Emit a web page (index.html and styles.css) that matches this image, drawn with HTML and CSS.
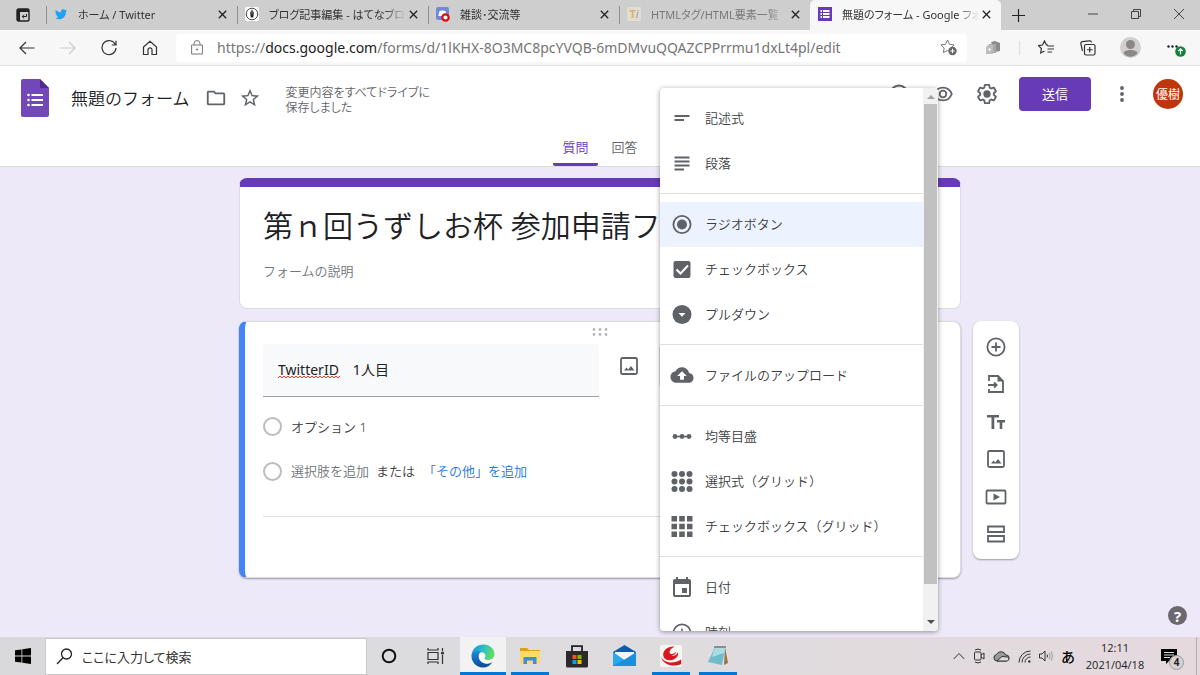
FILE: index.html
```
<!DOCTYPE html>
<html lang="ja">
<head>
    <meta charset="UTF-8">
    <meta name="viewport" content="width=device-width, initial-scale=1.0">
    <title>無題のフォーム - Google フォーム</title>
    <link rel="stylesheet" href="styles.css">
</head>
<body>
    <!-- browser tabs -->
    <div class="tabstrip">
        <button class="tab-menu" aria-label="タブ操作メニュー">
            <svg width="14" height="14" viewBox="0 0 14 14"><rect x="1" y="1" width="12" height="12" rx="1.5" fill="none" stroke="#222" stroke-width="1.4"/><path d="M1 1h12v3H1zM1 1h3v12H1z" fill="#222"/><path d="M10.500 6v2.500H6.500M8 6.800L6.300 8.500 8 10.200" fill="none" stroke="#222"/></svg>
        </button>
        <div class="tab">
            <svg width="14" height="14" viewBox="0 1 24 22" fill="#1da1f2"><path d="M22.46 6c-.77.35-1.6.58-2.46.69.88-.53 1.56-1.37 1.88-2.38-.83.5-1.75.85-2.72 1.05C18.37 4.5 17.26 4 16 4c-2.35 0-4.27 1.92-4.27 4.29 0 .34.04.67.11.98C8.28 9.09 5.11 7.38 3 4.79c-.37.63-.58 1.37-.58 2.15 0 1.49.75 2.81 1.91 3.56-.71 0-1.37-.2-1.95-.5v.03c0 2.08 1.48 3.82 3.44 4.21a4.22 4.22 0 0 1-1.93.07 4.28 4.28 0 0 0 4 2.98 8.521 8.521 0 0 1-5.33 1.84c-.34 0-.68-.02-1.02-.06C3.44 20.29 5.7 21 8.12 21 16 21 20.33 14.46 20.33 8.79c0-.19 0-.37-.01-.56.84-.6 1.56-1.36 2.14-2.23z"/></svg>
            <span class="tab-title">ホーム / Twitter</span>
            <button class="tab-close" aria-label="閉じる"><svg width="9" height="9" viewBox="0 0 9 9"><path d="M.8.8l7.400 7.400M8.200.8L.8 8.200"/></svg></button>
        </div>
        <div class="tab">
            <svg width="14" height="14" viewBox="0 0 14 14"><rect width="14" height="14" rx="2" fill="#fff"/><circle cx="7" cy="7" r="5.800" fill="none" stroke="#333" stroke-width=".9"/><path d="M7 2.500c1 1.500 1.800 2.600 1.800 4L8.200 10.500H5.800L5.200 6.500c0-1.400.8-2.500 1.800-4z" fill="#222"/><path d="M7 3v4.500" stroke="#fff" stroke-width=".5"/></svg>
            <span class="tab-title">ブログ記事編集 - はてなブログ</span>
            <button class="tab-close" aria-label="閉じる"><svg width="9" height="9" viewBox="0 0 9 9"><path d="M.8.8l7.400 7.400M8.200.8L.8 8.200"/></svg></button>
        </div>
        <div class="tab">
            <svg width="14" height="15" viewBox="0 0 14 15"><rect width="13" height="13" rx="2" fill="#7289da"/><path d="M2.500 9c0-2 .6-4 1.200-5 1.800-.8 3.800-.8 5.600 0 .6 1 1.200 3 1.200 5" fill="#fff"/><circle cx="9.500" cy="10.500" r="3.200" fill="#fff" stroke="#e00b0b" stroke-width="2.200"/></svg>
            <span class="tab-title">雑談･交流等</span>
            <button class="tab-close" aria-label="閉じる"><svg width="9" height="9" viewBox="0 0 9 9"><path d="M.8.8l7.400 7.400M8.200.8L.8 8.200"/></svg></button>
        </div>
        <div class="tab">
            <span class="favicon-ti"><b>T</b><i>i</i></span>
            <span class="tab-title sleeping">HTMLタグ/HTML要素一覧</span>
            <button class="tab-close" aria-label="閉じる"><svg width="9" height="9" viewBox="0 0 9 9"><path d="M.8.8l7.400 7.400M8.200.8L.8 8.200"/></svg></button>
        </div>
        <div class="tab active">
            <svg width="14" height="14" viewBox="0 0 14 14"><rect width="14" height="14" fill="#673ab7"/><path d="M2.500 3h1.500v2H2.500zM2.500 6h1.500v2H2.500zM2.500 9h1.500v2H2.500zM5 3h6.500v2H5zM5 6h6.500v2H5zM5 9h6.500v2H5z" fill="#fff"/></svg>
            <span class="tab-title">無題のフォーム - Google フォーム</span>
            <button class="tab-close" aria-label="閉じる"><svg width="9" height="9" viewBox="0 0 9 9"><path d="M.8.8l7.400 7.400M8.200.8L.8 8.200"/></svg></button>
        </div>
        <button class="new-tab" aria-label="新しいタブ"><svg width="13" height="13" viewBox="0 0 13 13"><path d="M6.500 0v13M0 6.500h13" stroke="#222" stroke-width="1.200"/></svg></button>
        <div class="window-controls">
            <button aria-label="最小化"><svg width="10" height="10" viewBox="0 0 10 10"><path d="M0 5h10"/></svg></button>
            <button aria-label="元に戻す"><svg width="10" height="10" viewBox="0 0 10 10"><path d="M.5 2.500h7v7h-7zM2.500 2.500v-2h7v7h-2"/></svg></button>
            <button aria-label="閉じる"><svg width="10" height="10" viewBox="0 0 10 10"><path d="M0 0l10 10M10 0L0 10"/></svg></button>
        </div>
    </div>

    <!-- address bar -->
    <div class="navbar">
        <button aria-label="戻る"><svg width="16" height="14" viewBox="0 0 16 14"><path d="M15.500 7H1M7 1L1 7l6 6"/></svg></button>
        <button aria-label="進む" disabled><svg width="16" height="14" viewBox="0 0 16 14"><path d="M.5 7H15M9 1l6 6-6 6"/></svg></button>
        <button aria-label="更新"><svg width="16" height="16" viewBox="0 0 16 16"><path d="M14.500 5A7 7 0 1 0 15 8M15 .8V5h-4.200"/></svg></button>
        <button aria-label="ホーム"><svg width="16" height="16" viewBox="0 0 16 16"><path d="M1.500 7L8 1.200 14.500 7v7.500H10V9.800a2 2 0 0 0-4 0v4.700H1.500z"/></svg></button>
        <div class="address">
            <svg width="12" height="15" viewBox="0 0 12 15"><path d="M.6 5h10.800v9H.6zM3 5V3.500a3 3 0 0 1 6 0V5" fill="none" stroke="#777"/><circle cx="6" cy="9.500" r="1" fill="#777"/></svg>
            <div class="url" role="textbox" aria-label="アドレス" contenteditable="true" spellcheck="false">https://<b>docs.google.com</b>/forms/d/1lKHX-8O3MC8pcYVQB-6mDMvuQQAZCPPrrmu1dxLt4pl/edit</div>
            <button aria-label="お気に入りに追加"><svg width="17" height="17" viewBox="0 0 17 17"><path d="M7.500 1l2 4.300 4.600.6L10.800 9l.8 4.600-4.100-2.200-4.100 2.200.8-4.600L.9 5.900l4.600-.6z" fill="none" stroke="#777"/><circle cx="12.500" cy="12" r="4.200" fill="#666"/><path d="M12.500 9.800v4.400M10.300 12h4.400" stroke="#fff"/></svg></button>
        </div>
        <button class="extension" aria-label="拡張機能"><svg width="14" height="14" viewBox="0 0 14 14"><path d="M5 1l4-1 5 2v8l-5 1z" fill="#8c8c8c"/><path d="M3 3h7v9H3z" fill="#a8a8a8"/><path d="M0 6l2-2h5v9H0z" fill="#bdbdbd"/><path d="M3.500 7v3M2 8.500h3" stroke="#eee"/></svg></button>
        <button aria-label="お気に入り"><svg width="16" height="15" viewBox="0 0 16 15"><path d="M10 5.200L8.500 5 6.500 1l-2 4-4 .6L3.400 8.500l-.7 4.500 3.800-2M9.500 6H16M9.500 9H16M9.500 12H14"/></svg></button>
        <button aria-label="コレクション"><svg width="16" height="16" viewBox="0 0 16 16"><rect x="4.500" y="4.500" width="10.500" height="10.500" rx="1.500"/><path d="M9.750 7v5.500M7 9.750h5.500M2.500 11L.8 3.500A1.800 1.800 0 0 1 2.200 1.600L9.500.8a1.800 1.800 0 0 1 2 1.500"/></svg></button>
        <button class="profile" aria-label="プロファイル"><svg width="21" height="21" viewBox="0 0 21 21"><circle cx="10.500" cy="10.500" r="10.500" fill="#d2d0ce"/><circle cx="10.500" cy="7.500" r="4.500" fill="#8a8886"/><path d="M3.500 16c1-4 13-4 14 0-3 5-11 5-14 0z" fill="#8a8886"/></svg></button>
        <button class="more" aria-label="設定など"><svg width="20" height="20" viewBox="0 0 20 20"><g fill="#222"><circle cx="2.500" cy="8.500" r="1.200"/><circle cx="6.500" cy="8.500" r="1.200"/><circle cx="10.500" cy="8.500" r="1.200"/></g><circle cx="14.500" cy="13.500" r="5.300" fill="#15803c"/><path d="M14.500 16.500v-5.500M12.300 13l2.200-2.200 2.200 2.200" stroke="#fff" fill="none"/></svg></button>
    </div>

    <!-- forms header -->
    <header class="app-header">
        <div class="header-row">
            <svg class="logo" width="28" height="38" viewBox="0 0 28 38"><path d="M2 0h17l9 9v27a2 2 0 0 1-2 2H2a2 2 0 0 1-2-2V2a2 2 0 0 1 2-2z" fill="#7248b9"/><path d="M19 0l9 9h-9z" fill="#4f2f8c"/><g fill="#fff"><circle cx="7.500" cy="16" r="1.300"/><circle cx="7.500" cy="21" r="1.300"/><circle cx="7.500" cy="26" r="1.300"/><path d="M10.500 15H22v2H10.500zM10.500 20H22v2H10.500zM10.500 25H22v2H10.500z"/></g></svg>
            <span class="doc-name">無題のフォーム</span>
            <button aria-label="フォルダに移動"><svg width="22" height="22" viewBox="0 0 24 24" fill="#5f6368"><path d="M9.170 6l2 2H20v10H4V6h5.170M10 4H4c-1.100 0-1.990.9-1.990 2L2 18c0 1.100.9 2 2 2h16c1.100 0 2-.9 2-2V8c0-1.100-.9-2-2-2h-8l-2-2z"/></svg></button>
            <button class="star" aria-label="スターを付ける"><svg width="22" height="22" viewBox="0 0 24 24" fill="#5f6368"><path d="M22 9.240l-7.190-.62L12 2 9.190 8.630 2 9.240l5.460 4.730L5.820 21 12 17.270 18.180 21l-1.630-7.030L22 9.240zM12 15.400l-3.760 2.270 1-4.280-3.320-2.880 4.380-.38L12 6.100l1.710 4.040 4.380.38-3.320 2.880 1 4.280L12 15.400z"/></svg></button>
            <span class="saved">変更内容をすべてドライブに保存しました</span>
            <div class="header-actions">
                <button aria-label="テーマをカスタマイズ"><svg width="22" height="22" viewBox="0 0 22 22" fill="none" stroke="#5f6368" stroke-width="2"><circle cx="11" cy="11" r="8.500"/></svg></button>
                <button aria-label="プレビュー"><svg width="20" height="16" viewBox="0 0 20 16" fill="none" stroke="#5f6368" stroke-width="1.800"><path d="M1.200 8C4.500-.6 15.500-.6 18.800 8 15.500 16.600 4.500 16.600 1.200 8z"/><circle cx="10" cy="8" r="3.300"/></svg></button>
                <button aria-label="設定"><svg width="22" height="22" viewBox="0 0 24 24"><path fill="none" stroke="#5f6368" stroke-width="2" d="M19.430 12.980c.04-.32.07-.64.07-.98s-.03-.66-.07-.98l2.110-1.650c.19-.15.24-.42.12-.64l-2-3.460c-.12-.22-.39-.3-.61-.22l-2.490 1c-.52-.4-1.080-.73-1.690-.98l-.38-2.650C14.460 2.180 14.250 2 14 2h-4c-.25 0-.46.18-.49.42l-.38 2.650c-.61.25-1.170.59-1.690.98l-2.490-1c-.23-.09-.49 0-.61.22l-2 3.460c-.13.22-.07.49.12.64l2.110 1.650c-.04.32-.07.65-.07.98s.03.66.07.98l-2.110 1.650c-.19.15-.24.42-.12.64l2 3.460c.12.22.39.3.61.22l2.490-1c.52.4 1.080.73 1.690.98l.38 2.650c.03.24.24.42.49.42h4c.25 0 .46-.18.49-.42l.38-2.650c.61-.25 1.170-.59 1.690-.98l2.490 1c.23.09.49 0 .61-.22l2-3.460c.12-.22.07-.49-.12-.64z"/><circle cx="12" cy="12" r="4" fill="#5f6368"/></svg></button>
                <button class="send">送信</button>
                <button class="kebab" aria-label="その他"><svg width="4" height="16" viewBox="0 0 4 16" fill="#5f6368"><circle cx="2" cy="2" r="1.900"/><circle cx="2" cy="8" r="1.900"/><circle cx="2" cy="14" r="1.900"/></svg></button>
                <button class="account">優樹</button>
            </div>
        </div>
        <nav class="form-tabs">
            <button class="selected">質問</button>
            <button>回答</button>
        </nav>
    </header>

    <main class="canvas">
        <section class="card title-card">
            <input class="form-title" type="text" aria-label="フォームのタイトル" value="第ｎ回うずしお杯 参加申請フォーム">
            <input class="form-desc" type="text" aria-label="フォームの説明" placeholder="フォームの説明">
        </section>

        <section class="card question-card">
            <svg class="drag" width="16" height="8" viewBox="0 0 16 8" fill="#b4b6b9"><circle cx="2" cy="1.500" r="1.400"/><circle cx="8" cy="1.500" r="1.400"/><circle cx="14" cy="1.500" r="1.400"/><circle cx="2" cy="6.500" r="1.400"/><circle cx="8" cy="6.500" r="1.400"/><circle cx="14" cy="6.500" r="1.400"/></svg>
            <div class="question-row">
                <div class="question-field">
                    <input type="text" aria-label="質問" value="TwitterID　1人目" spellcheck="false">
                    <svg class="squiggle" width="62" height="4"><defs><pattern id="wave" width="4" height="4" patternUnits="userSpaceOnUse"><path d="M0 3l2-2 2 2" fill="none" stroke="#f33"/></pattern></defs><rect width="62" height="4" fill="url(#wave)"/></svg>
                </div>
                <button class="add-image" aria-label="画像を追加"><svg width="18" height="18" viewBox="0 0 18 18"><rect x="1" y="1" width="16" height="16" rx="1.500" fill="none" stroke="#5f6368" stroke-width="1.800"/><path d="M4 13.500l2.500-3 1.800 2 2.700-3.500 3.500 4.500z" fill="#5f6368"/></svg></button>
                <button class="type-select" aria-label="質問の種類" aria-haspopup="listbox"></button>
            </div>
            <div class="option">
                <input type="radio" name="answer" aria-label="オプション 1" disabled>
                <input class="option-text" type="text" aria-label="選択肢の値" value="オプション 1">
            </div>
            <div class="option">
                <input type="radio" name="answer" id="add-option" disabled>
                <label for="add-option">選択肢を追加</label>
                <span class="or">または</span>
                <a href="#">「その他」を追加</a>
            </div>
            <hr>

            <!-- question type menu, opened over the card -->
            <div class="type-menu">
                <div class="type-list" role="listbox" aria-label="質問の種類">
                    <div class="type-group">
                        <button role="option"><svg width="24" height="24" viewBox="0 0 24 24"><path d="M4.500 9h15v2h-15zM4.500 13H14v2H4.500z"/></svg>記述式</button>
                        <button role="option"><svg width="24" height="24" viewBox="0 0 24 24"><path d="M4.500 5.500h15v2h-15zM4.500 9.500h15v2h-15zM4.500 13.500h15v2h-15zM4.500 17.500H14v2H4.500z"/></svg>段落</button>
                    </div>
                    <div class="type-group">
                        <button role="option" class="current" aria-selected="true"><svg width="24" height="24" viewBox="0 0 24 24"><circle cx="12" cy="12.500" r="8.600" fill="none" stroke="#5f6368" stroke-width="1.800"/><circle cx="12" cy="12.500" r="5"/></svg>ラジオボタン</button>
                        <button role="option"><svg width="24" height="24" viewBox="0 0 24 24"><rect x="3.500" y="4" width="17" height="17" rx="2"/><path d="M6.500 12.500l4 4 7.500-8" fill="none" stroke="#fff" stroke-width="2"/></svg>チェックボックス</button>
                        <button role="option"><svg width="24" height="24" viewBox="0 0 24 24"><circle cx="12" cy="12.500" r="9.500"/><path d="M8.500 11h7L12 14.800z" fill="#fff"/></svg>プルダウン</button>
                    </div>
                    <div class="type-group">
                        <button role="option"><svg width="24" height="24" viewBox="-.5 -.5 25 25"><path d="M19.350 10.040C18.670 6.590 15.640 4 12 4 9.110 4 6.600 5.640 5.350 8.040 2.340 8.360 0 10.910 0 14c0 3.310 2.690 6 6 6h13c2.760 0 5-2.240 5-5 0-2.640-2.050-4.780-4.650-4.960zM14 13v4h-4v-4H7l5-5 5 5h-3z"/></svg>ファイルのアップロード</button>
                    </div>
                    <div class="type-group">
                        <button role="option"><svg width="24" height="24" viewBox="0 0 24 24"><circle cx="5" cy="12.500" r="2.400"/><circle cx="12" cy="12.500" r="2.400"/><circle cx="19" cy="12.500" r="2.400"/><path d="M5 11.700h14v1.600H5z"/></svg>均等目盛</button>
                        <button role="option"><svg width="24" height="24" viewBox="0 0 24 24"><circle cx="4.500" cy="5" r="3"/><circle cx="12" cy="5" r="3"/><circle cx="19.500" cy="5" r="3"/><circle cx="4.500" cy="12.500" r="3"/><circle cx="12" cy="12.500" r="3"/><circle cx="19.500" cy="12.500" r="3"/><circle cx="4.500" cy="20" r="3"/><circle cx="12" cy="20" r="3"/><circle cx="19.500" cy="20" r="3"/></svg>選択式（グリッド）</button>
                        <button role="option"><svg width="24" height="24" viewBox="0 0 24 24"><path d="M1.500 2H7v5.500H1.500zM9.200 2h5.600v5.500H9.200zM17 2h5.500v5.500H17zM1.500 9.700H7v5.600H1.500zM9.200 9.700h5.600v5.600H9.200zM17 9.700h5.500v5.600H17zM1.500 17.500H7V23H1.500zM9.200 17.500h5.600V23H9.200zM17 17.500h5.500V23H17z"/></svg>チェックボックス（グリッド）</button>
                    </div>
                    <div class="type-group">
                        <button role="option"><svg width="24" height="24" viewBox="0 0 24 24"><path transform="translate(0 1)" d="M17 12h-5v5h5v-5zM16 1v2H8V1H6v2H5c-1.110 0-1.990.9-1.990 2L3 19c0 1.100.89 2 2 2h14c1.100 0 2-.9 2-2V5c0-1.100-.9-2-2-2h-1V1h-2zm3 18H5V8h14v11z"/></svg>日付</button>
                        <button role="option"><svg width="24" height="24" viewBox="0 0 24 24"><circle cx="12" cy="13" r="8.600" fill="none" stroke="#5f6368" stroke-width="1.800"/><path d="M11.200 8.500h1.600V13h-1.600z"/></svg>時刻</button>
                    </div>
                </div>
                <div class="scrollbar">
                    <svg width="8" height="4" viewBox="0 0 8 4"><path d="M0 4l4-4 4 4z" fill="#a3a3a3"/></svg>
                    <div class="track"><div class="thumb"></div></div>
                    <svg width="8" height="4" viewBox="0 0 8 4"><path d="M0 0l4 4 4-4z" fill="#505050"/></svg>
                </div>
            </div>
        </section>

        <aside class="tools">
            <button aria-label="質問を追加"><svg width="20" height="20" viewBox="0 0 20 20"><circle cx="10" cy="10" r="8.600"/><path d="M10 5.500v9M5.500 10h9"/></svg></button>
            <button aria-label="質問をインポート"><svg width="20" height="20" viewBox="0 0 20 20"><path d="M3 7V2h9l5 5v11H3v-3M2 11h8.500M8 8.300l2.700 2.700L8 13.700"/><path d="M11.500 1.500l6 6h-6z" fill="#5f6368" stroke="none"/></svg></button>
            <button aria-label="タイトルと説明を追加"><svg width="20" height="20" viewBox="0 0 20 20"><g fill="#5f6368" stroke="none"><rect x="1" y="3" width="12" height="2.500"/><rect x="5.500" y="3" width="2.800" height="14"/><rect x="11" y="8" width="8" height="2.500"/><rect x="13.700" y="8" width="2.600" height="9"/></g></svg></button>
            <button aria-label="画像を追加"><svg width="20" height="20" viewBox="0 0 20 20"><rect x="2" y="2" width="16" height="16" rx="1.500"/><path d="M5 14.500l2.500-3 1.800 2 2.700-3.500 3.500 4.500z" fill="#5f6368" stroke="none"/></svg></button>
            <button aria-label="動画を追加"><svg width="22" height="20" viewBox="0 0 22 20"><rect x="1.500" y="3.500" width="19" height="13" rx="1"/><path d="M8.500 6.500l6.500 3.500-6.500 3.500z" fill="#5f6368" stroke="none"/></svg></button>
            <button aria-label="セクションを追加"><svg width="20" height="20" viewBox="0 0 20 20"><path d="M2 2.500h16V8H2zM2 12h16v5.500H2z"/></svg></button>
        </aside>
        <button class="help" aria-label="ヘルプ">?</button>
    </main>

    <!-- windows taskbar -->
    <footer class="taskbar">
        <button class="start" aria-label="スタート"><svg width="16" height="16" viewBox="0 0 16 16"><path d="M0 2.300L6.500 1.400v6.200H0zM7.300 1.300L16 0v7.600H7.300zM0 8.400h6.500v6.200L0 13.700zM7.300 8.400H16V16l-8.700-1.300z"/></svg></button>
        <label class="search">
            <svg width="17" height="17" viewBox="0 0 17 17" fill="none" stroke="#222" stroke-width="1.300"><circle cx="10.500" cy="6" r="5"/><path d="M7 9.800L1 16"/></svg>
            <input type="text" aria-label="検索" placeholder="ここに入力して検索">
        </label>
        <div class="apps">
            <button aria-label="Cortana"><svg width="16" height="16" viewBox="0 0 16 16"><circle cx="8" cy="8" r="6.300" fill="none" stroke="#111" stroke-width="2"/></svg></button>
            <button aria-label="タスク ビュー"><svg width="18" height="16" viewBox="0 0 18 16" fill="none" stroke="#333" stroke-width="1.200"><path d="M1 4.500h10v7H1zM1 0v2h10V0M1 16v-2h10v2M15.500 0v3M15.500 7v9"/><circle cx="15.500" cy="5" r="1" fill="#333"/></svg></button>
            <button class="running focused" aria-label="Microsoft Edge"><svg width="24" height="24" viewBox="0 0 24 24"><defs><linearGradient id="e1" x2="1" y2=".3"><stop stop-color="#1687d9"/><stop offset=".55" stop-color="#2bc0c8"/><stop offset="1" stop-color="#5fdc62"/></linearGradient><linearGradient id="e2" x2="0" y2="1"><stop stop-color="#1b8ddb"/><stop offset="1" stop-color="#0b4a98"/></linearGradient></defs><path d="M.5 11C1.500 4.500 6.500.5 12.500.5c6.500 0 11 4.500 11 9.500 0 3.800-3 6-6.500 6-2.500 0-4-1-3.200-2 1.600-2 .6-5.500-3.300-5.500C5.500 8 2 9 .5 11z" fill="url(#e1)"/><path d="M.5 11C1.500 7.500 6 6 10.500 7.500 7.500 9 7 13 9 16c2.500 3.500 8 4.500 12.500 2C19 22 15.500 23.600 12 23.500 5 23.500 0 17.500.5 11z" fill="url(#e2)"/><path d="M10 8.500C7.500 10 7 14 9.500 17c3 3.200 8 3.500 12.200.8-3 .7-6.500.2-8.700-2.300-1-1.500-.5-2 .5-3.500.5-1.500-.5-3.500-3.500-3.500z" fill="#fff" fill-opacity=".85"/></svg></button>
            <button class="running" aria-label="エクスプローラー"><svg width="20" height="18" viewBox="0 0 20 18"><path d="M0 1h7l2 2h11v13H0z" fill="#e0a116"/><path d="M0 4h20v12.500H0z" fill="#ffd868"/><path d="M3.500 17v-7h13v7h-3.500v-3.500H7V17z" fill="#3a8edb"/></svg></button>
            <button aria-label="Microsoft Store"><svg width="22" height="23" viewBox="0 0 22 23"><path d="M6 7V1.200h10V7" fill="none" stroke="#222" stroke-width="1.800"/><path d="M0 6h22v15a1.500 1.500 0 0 1-1.500 1.500h-19A1.500 1.500 0 0 1 0 21z" fill="#2a2a2a"/><path d="M6.500 10h4v4h-4z" fill="#f25022"/><path d="M11.500 10h4v4h-4z" fill="#7fba00"/><path d="M6.500 15h4v4h-4z" fill="#00a4ef"/><path d="M11.500 15h4v4h-4z" fill="#ffb900"/></svg></button>
            <button aria-label="メール"><svg width="23" height="22" viewBox="0 0 23 22"><path d="M0 7l11.500-7L23 7v5H0z" fill="#0b5cab"/><path d="M2 7h19v8H2z" fill="#f5f5f5"/><path d="M0 7l11.500 8L23 7v14H0z" fill="#2ba8ea"/><path d="M0 21L23 8v13z" fill="#1b8fdc"/></svg></button>
            <button class="running" aria-label="ウイルスバスター"><svg width="22" height="22" viewBox="0 0 22 22"><rect width="22" height="22" rx="2" fill="#f7f5f4"/><path d="M14.500 1.500C8 1 3 5 3.200 10c.2 4.500 6 6.500 10.500 4.500 3.500-1.600 5-4.500 4.300-7.500-1 3-4 4.500-6.300 3.500 2.500-.3 4.300-2 4.300-4-1.500 2.300-4 3-5.700 2.200-1.800-1.500 0-5 4.200-7.200z" fill="#d71920"/><path d="M.8 11.500c2.500 6 12 8.500 20.400 3v4.500C13 22.500 3 20 .8 11.500z" fill="#d71920"/></svg></button>
            <button class="running" aria-label="メモ帳"><svg width="22" height="20" viewBox="0 0 22 20"><path d="M18 1l3 16-4 2z" fill="#9c7440"/><path d="M8 1l10 1-3 17L1 16z" fill="#6fbccb"/><path d="M8 1l10 1-1 5L5 11z" fill="#a8dde3"/><path d="M7 1h12" stroke="#777" stroke-width="1.500"/></svg></button>
        </div>
        <div class="tray">
            <svg width="12" height="8" viewBox="0 0 12 8"><path d="M.7 7L6 1.500 11.300 7"/></svg>
            <svg width="12" height="16" viewBox="0 0 12 16"><rect x="1.500" y="4" width="6.500" height="8" rx="1"/><path d="M8 7l3-2v6L8 9M2 2q3-2 6 0M2 14q3 2 6 0"/></svg>
            <svg width="17" height="12" viewBox="0 0 17 12"><path d="M4 11a3.300 3.300 0 0 1-.5-6.500 5 5 0 0 1 9.200.5A3 3 0 0 1 13.500 11z" fill="#999"/><path d="M4 11l5-4.500 5.500.5c2 1.500 1 4-1 4z" fill="#ddd"/></svg>
            <svg width="13" height="13" viewBox="0 0 13 13"><path d="M1 12.500A11.500 11.500 0 0 1 12.500 1M4 12.500A8.500 8.500 0 0 1 12.500 4M7 12.500A5.500 5.500 0 0 1 12.500 7"/><circle cx="11.300" cy="11.500" r="1.200" fill="#333" stroke="none"/></svg>
            <svg width="14" height="12" viewBox="0 0 14 12"><path d="M.5 4h2.500l3-3v10L3 8H.5zM8 4.500q1 1.500 0 3"/><path d="M10 3q2 3 0 6M12 1.500q3 4.500 0 9" stroke="#999"/></svg>
            <span class="ime">あ</span>
            <div class="clock"><span>12:11</span><span>2021/04/18</span></div>
            <button class="notify" aria-label="通知"><svg width="16" height="15" viewBox="0 0 16 15"><path d="M0 0h16v12H8l-3 3v-3H0z" fill="#000" stroke="none"/><path d="M3 3.500h10M3 6h10M3 8.500h6" stroke="#ddd"/></svg><span class="badge">4</span></button>
        </div>
    </footer>
</body>
</html>
```
FILE: styles.css
```
* {
    box-sizing: border-box;
}

body {
    margin: 0;
    height: 100vh;
    display: flex;
    flex-direction: column;
    overflow: hidden;
    font-family: "Noto Sans", "Noto Sans CJK JP", sans-serif;
    font-size: 13px;
    color: #3c4043;
    background: #eee9f8;
}

button {
    display: flex;
    align-items: center;
    justify-content: center;
    padding: 0;
    border: none;
    background: none;
    font: inherit;
    color: inherit;
    cursor: pointer;
}

input {
    border: none;
    background: none;
    padding: 0;
    margin: 0;
    min-width: 0;
    font: inherit;
    color: inherit;
    outline: none;
}

svg {
    flex: none;
}

/* tab strip */
.tabstrip {
    display: flex;
    height: 30px;
    background: #cecece;
    font-size: 11px;
    font-feature-settings: "palt";
    color: #333;
}

.tab-menu {
    width: 46px;
}

.tab {
    flex: 0 1 191px;
    display: flex;
    align-items: center;
    gap: 10px;
    padding: 0 10px 2px 8px;
    min-width: 0;
    background: linear-gradient(#8f8f8f, #8f8f8f) left 0 top 6px / 1px 18px no-repeat;
}

.tab-title {
    flex: 1;
    margin-right: -8px;
    overflow: hidden;
    white-space: nowrap;
    mask-image: linear-gradient(to right, #000 84%, transparent 100%);
}

.tab-title.sleeping {
    color: #777;
}

.tab-close {
    width: 10px;
}

.tab-close svg {
    fill: none;
    stroke: #222;
    stroke-width: 1.3;
}

.tab.active {
    background: #f7f7f7;
    border-radius: 5px 5px 0 0;
}

.favicon-ti {
    width: 14px;
    height: 14px;
    background: #e2dcd2;
    font-size: 11px;
    line-height: 14px;
    text-align: center;
    color: #9a9a9a;
}

.favicon-ti b {
    color: #dcb263;
}

.new-tab {
    width: 34px;
}

.window-controls {
    display: flex;
    margin-left: auto;
    padding-bottom: 3px;
}

.window-controls button {
    width: 43px;
}

.window-controls svg {
    fill: none;
    stroke: #444;
}

/* address bar row */
.navbar {
    display: flex;
    align-items: center;
    height: 36px;
    padding-left: 6px;
    background: #f7f7f7;
    border-bottom: 1px solid #e2e2e2;
}

.navbar button {
    width: 41px;
}

.navbar .address ~ button {
    width: 42px;
}

.navbar > button > svg {
    fill: none;
    stroke: #333;
    stroke-width: 1.2;
}

.navbar > button:disabled > svg {
    stroke: #ccc;
}

.navbar .profile svg,
.navbar .more svg,
.navbar .extension svg {
    stroke: none;
}

.address {
    flex: 1;
    display: flex;
    align-items: center;
    gap: 14px;
    min-width: 0;
    height: 28px;
    margin-left: 6px;
    padding: 0 10px 0 15px;
    background: #fff;
    border-radius: 4px;
}

.url {
    flex: 1;
    overflow: hidden;
    white-space: nowrap;
    font-size: 14px;
    color: #757575;
}

.url b {
    font-weight: normal;
    color: #222;
}

.navbar .address button {
    width: 18px;
}

.navbar .address ~ .extension {
    width: 53px;
    margin-right: 5px;
    border-right: 1px solid #ddd;
}

.navbar .address ~ .more {
    width: 49px;
}

/* forms header */
.app-header {
    height: 101px;
    background: #fff;
    border-bottom: 1px solid #dadce0;
}

.header-row {
    display: flex;
    align-items: center;
    height: 64px;
    padding-left: 21px;
}

.doc-name {
    margin: 0 15px 2px 22px;
    font-size: 17px;
    font-weight: 350;
    color: #202124;
}

.header-row .star {
    margin-left: 12px;
}

.saved {
    width: 152px;
    margin: 4px 0 0 25px;
    font-size: 12px;
    line-height: 15px;
    font-weight: 350;
    font-feature-settings: "palt";
    color: #5f6368;
}

.header-actions {
    display: flex;
    align-items: center;
    margin: 0 17px 8px auto;
}

.header-actions button {
    width: 44px;
}

.header-actions .send {
    width: 72px;
    height: 34px;
    margin-left: 10px;
    padding-bottom: 2px;
    border-radius: 4px;
    background: #673ab7;
    color: #fff;
}

.header-actions .kebab {
    width: 62px;
}

.header-actions .account {
    width: 30px;
    height: 30px;
    border-radius: 50%;
    background: #bf360c;
    color: #fff;
    font-size: 12px;
}

.form-tabs {
    display: flex;
    justify-content: center;
    gap: 4px;
    font-weight: 350;
}

.form-tabs button {
    width: 45px;
    height: 36px;
    border-bottom: 3px solid transparent;
    border-radius: 2px;
    color: #5f6368;
}

.form-tabs .selected {
    color: #673ab7;
    border-color: #673ab7;
}

/* form canvas */
.canvas {
    position: relative;
    flex: 1;
    display: grid;
    grid-template-columns: 1fr minmax(0, 722px) 1fr;
    align-content: start;
    gap: 12px;
    padding-top: 11px;
    font-weight: 350;
}

.card {
    grid-column: 2;
    background: #fff;
    border: 1px solid #dadce0;
    border-radius: 8px;
}

.title-card {
    display: flex;
    flex-direction: column;
    padding: 13px 24px 27px 23px;
    border-top: 9px solid #673ab7;
}

.form-title {
    height: 48px;
    font-size: 30px;
    color: #202124;
}

.form-desc {
    height: 20px;
    margin-top: 13px;
}

.form-desc::placeholder {
    color: #70757a;
    opacity: 1;
}

.question-card {
    position: relative;
    padding: 6px 23px 60px 18px;
    border-left: 6px solid #4285f4;
    box-shadow: 0 1px 2px rgba(0, 0, 0, 0.35);
}

.drag {
    display: block;
    margin: 0 auto 8px;
}

.question-row {
    display: flex;
    align-items: flex-start;
}

.question-field {
    position: relative;
    flex: 1;
    height: 53px;
    background: #f8f9fa;
    border-bottom: 1px solid #9aa0a6;
    border-radius: 4px 4px 0 0;
}

.question-field input {
    width: 100%;
    height: 52px;
    padding: 0 15px 2px;
    font-size: 14px;
    font-weight: 400;
    color: #202124;
}

.squiggle {
    position: absolute;
    left: 15px;
    top: 31px;
}

.add-image {
    width: 60px;
    height: 44px;
}

.type-select {
    width: 278px;
    height: 44px;
    border: 1px solid #dadce0;
    border-radius: 4px;
}

.option {
    display: flex;
    align-items: center;
    height: 45px;
    padding-bottom: 1px;
}

.question-row + .option {
    margin-top: 7px;
}

.option input[type="radio"] {
    appearance: none;
    width: 19px;
    height: 19px;
    margin-right: 9px;
    border: 2px solid #bdbdbd;
    border-radius: 50%;
}

.option-text {
    flex: 1;
}

.option label {
    color: #70757a;
}

.option label,
.option .or,
.option a {
    padding-bottom: 2px;
}

.option .or {
    margin: 0 8px 0 7px;
}

.option a {
    color: #1a73e8;
    text-decoration: none;
}

.question-card hr {
    margin: 22px 0 0;
    border: none;
    border-top: 1px solid #e0e0e0;
}

/* question type menu */
.type-menu {
    position: absolute;
    z-index: 10;
    top: -234px;
    left: 415px;
    width: 278px;
    height: 543px;
    display: flex;
    overflow: hidden;
    background: #fff;
    border-radius: 4px;
    box-shadow: 0 1px 5px rgba(0, 0, 0, 0.4);
}

.type-list {
    flex: 1;
    overflow: hidden;
}

.type-group {
    padding: 8px 0 7px;
    border-bottom: 1px solid #e0e0e0;
}

.type-group button {
    width: 100%;
    height: 45px;
    justify-content: flex-start;
    gap: 11px;
    padding: 0 0 2px 10px;
}

.type-group svg {
    fill: #5f6368;
}

.type-group .current {
    background: #ecf3fe;
}

.scrollbar {
    width: 15px;
    display: flex;
    flex-direction: column;
    align-items: center;
    padding: 7px 1px;
    background: #f1f1f1;
}

.track {
    flex: 1;
    width: 100%;
    margin: 5px 0;
}

.thumb {
    height: 94%;
    background: #c1c1c1;
}

/* side tools */
.tools {
    grid-column: 3;
    display: flex;
    flex-direction: column;
    align-self: start;
    width: 46px;
    min-height: 238px;
    padding: 7px 0 6px;
    background: #fff;
    border-radius: 8px;
    box-shadow: 0 1px 2px rgba(0, 0, 0, 0.35);
}

.tools button {
    flex: 1;
}

.tools svg {
    fill: none;
    stroke: #5f6368;
    stroke-width: 1.8;
}

.help {
    position: absolute;
    right: 13px;
    bottom: 12px;
    width: 19px;
    height: 19px;
    border-radius: 50%;
    background: #6b6870;
    color: #fff;
    font-size: 15px;
    font-weight: 700;
}

/* taskbar */
.taskbar {
    display: flex;
    height: 38px;
    background: linear-gradient(to right, #d9d9db, #dedcde 50%, #e5d9de);
    color: #222;
}

.start {
    width: 45px;
}

.search {
    flex: 0 1 322px;
    display: flex;
    align-items: center;
    gap: 9px;
    margin: 1px 0 0;
    padding: 0 10px;
    background: #fff;
    border: 1px solid #c8c8c8;
}

.search input {
    flex: 1;
    font-feature-settings: "palt";
}

.search input::placeholder {
    color: #333;
    opacity: 1;
}

.apps {
    display: flex;
    gap: 9px;
    padding-left: 3px;
}

.apps button {
    width: 38px;
    border-top: 3px solid transparent;
    border-bottom: 3px solid transparent;
}

.apps .running {
    border-bottom-color: #0078d7;
}

.apps .focused {
    width: 46px;
    margin: 0 -4px;
    background: #f2f2f2;
}

.tray {
    display: flex;
    align-items: center;
    gap: 8px;
    margin-left: auto;
    margin-right: 3px;
    padding-right: 13px;
    border-right: 1px solid #b5adb0;
}

.tray svg {
    fill: none;
    stroke: #333;
}

.ime {
    font-size: 14px;
    font-weight: 500;
    color: #000;
}

.clock {
    display: flex;
    flex-direction: column;
    align-items: center;
    width: 60px;
    margin: 0 8px 0 2px;
    font-family: "Open Sans", sans-serif;
    font-size: 11px;
    line-height: 17px;
}

.notify {
    position: relative;
    width: 22px;
    justify-content: flex-start;
}

.badge {
    position: absolute;
    left: 8px;
    top: 6px;
    width: 15px;
    height: 15px;
    border: 1px solid #999;
    border-radius: 50%;
    background: #d8d2d5;
    font-size: 10px;
    font-weight: 700;
    line-height: 13px;
}
```
